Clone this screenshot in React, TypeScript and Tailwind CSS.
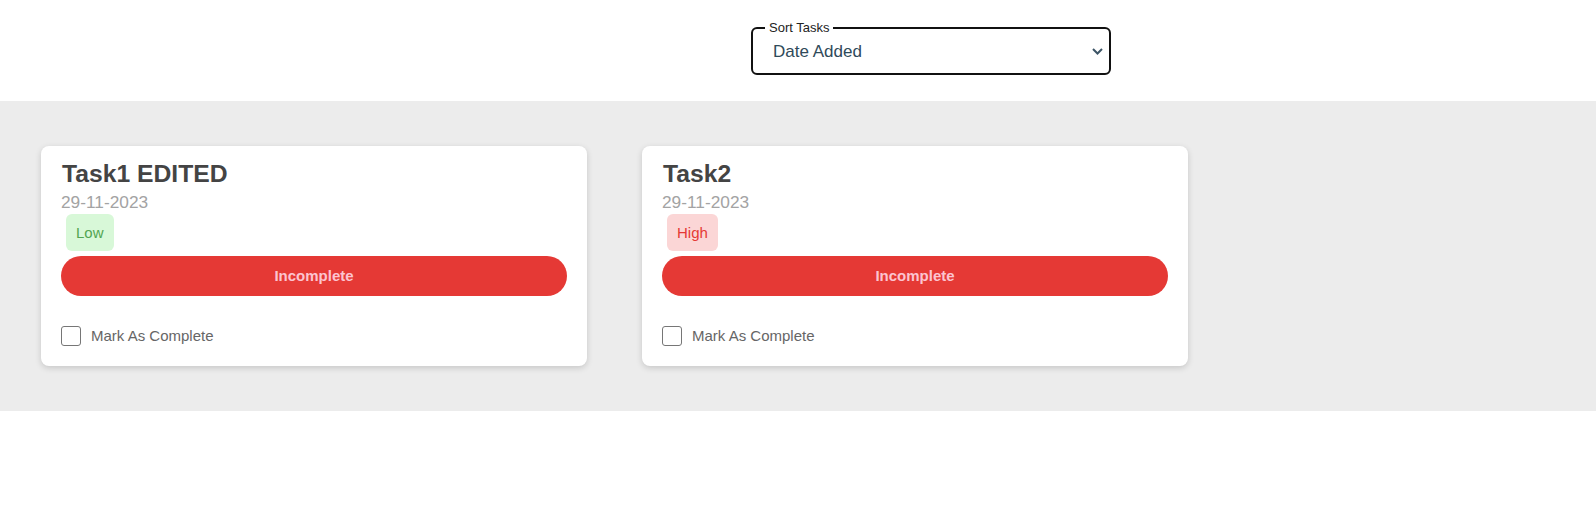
import React, { useState } from 'react';

type Task = {
  id: number;
  title: string;
  date: string;
  priority: 'Low' | 'High';
};

const tasks: Task[] = [
  { id: 1, title: 'Task1 EDITED', date: '29-11-2023', priority: 'Low' },
  { id: 2, title: 'Task2', date: '29-11-2023', priority: 'High' },
];

function PriorityBadge({ priority }: { priority: Task['priority'] }) {
  const cls =
    priority === 'Low'
      ? 'bg-[#d8f8d8] text-[#52a552]'
      : 'bg-[#fbd6d6] text-[#e53935]';
  return (
    <span className={`ml-[5px] inline-block rounded-[6px] px-[10px] py-[10px] text-[15px] leading-[17px] ${cls}`}>
      {priority}
    </span>
  );
}

function TaskCard({ task }: { task: Task }) {
  const [done, setDone] = useState(false);

  return (
    <div className="w-[546px] rounded-[8px] bg-white px-[20px] pt-[14px] pb-[20px] shadow-[0_2px_6px_rgba(0,0,0,0.16)]">
      <h2 className="pl-[1px] text-[24.7px] leading-[28px] font-bold text-[#444444]">{task.title}</h2>
      <p className="mt-[4px] text-[17.3px] leading-[20px] text-[#a3a3a3]">{task.date}</p>
      <div className="mt-[2px] flex">
        <PriorityBadge priority={task.priority} />
      </div>
      <button className="mt-[5px] h-10 w-full rounded-full bg-[#e53935] text-[15px] font-bold text-[#fcc4d0]">
        {done ? 'Complete' : 'Incomplete'}
      </button>
      <label className="mt-[30px] flex items-center gap-[10px] text-[15px] leading-[20px] text-[#666666]">
        <input
          type="checkbox"
          checked={done}
          onChange={(e) => setDone(e.target.checked)}
          className="h-5 w-5 appearance-none rounded-[3px] border-[1.5px] border-[#767676] bg-white"
        />
        Mark As Complete
      </label>
    </div>
  );
}

export default function App() {
  const [sort, setSort] = useState('date');

  return (
    <div className="min-h-[532px] bg-white font-['Liberation_Sans',Arial,sans-serif]">
      {/* Sort control */}
      <div className="flex h-[101px] pl-[751px] pt-[20px]">
        <fieldset className="h-[55px] w-[360px] rounded-[6px] border-2 border-[#111111]">
          <legend className="ml-[12px] px-[4px] text-[13px] leading-[15px] text-[#222222]">Sort Tasks</legend>
          <div className="relative">
            <select
              value={sort}
              onChange={(e) => setSort(e.target.value)}
              className="block h-[32px] w-full appearance-none bg-transparent pl-[20px] pt-[2px] text-[17px] leading-[20px] text-[#2f4a5a] outline-none"
            >
              <option value="date">Date Added</option>
              <option value="priority">Priority</option>
              <option value="status">Status</option>
            </select>
            <svg
              className="pointer-events-none absolute right-[6px] top-[13px]"
              width="11"
              height="7"
              viewBox="0 0 11 7"
              fill="none"
            >
              <path d="M1 1l4.5 4.5L10 1" stroke="#3d5566" strokeWidth="2" />
            </svg>
          </div>
        </fieldset>
      </div>

      {/* Task list */}
      <div className="flex gap-[55px] bg-[#ececec] pl-[41px] pr-[40px] py-[45px]">
        {tasks.map((t) => (
          <TaskCard key={t.id} task={t} />
        ))}
      </div>
    </div>
  );
}
